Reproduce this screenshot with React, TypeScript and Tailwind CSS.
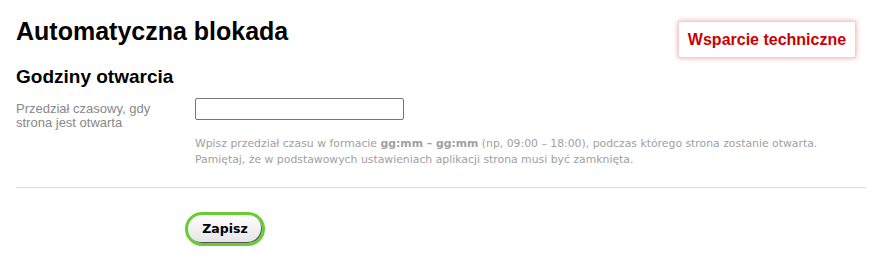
import React from "react";

export default function App() {
  return (
    <div className="w-[882px] h-[266px] bg-white px-4 pt-[13px] font-['Liberation_Sans',Arial,sans-serif]">
      <div className="flex items-start justify-between">
        <h1 className="text-[25px] leading-[36px] font-bold text-black">Automatyczna blokada</h1>
        <div className="mt-[8px] mr-[10px] w-[178px] h-[37px] flex items-center justify-center bg-white border border-[#f3d0d0] shadow-[0_0_5px_rgba(220,60,60,0.45)]">
          <span className="text-[16px] font-bold text-[#cc0000]">Wsparcie techniczne</span>
        </div>
      </div>
      <h2 className="mt-[7px] text-[19px] leading-[24px] font-bold text-black">Godziny otwarcia</h2>
      <div className="mt-[9px] flex">
        <div className="w-[179px] pt-[4px] text-[13px] leading-[14px] text-[#888888]">
          Przedział czasowy, gdy
          <br />
          strona jest otwarta
        </div>
        <div className="flex flex-col">
          <input type="text" className="w-[209px] h-[22px] border border-[#767676] rounded-[2px] bg-white outline-none" />
          <p className="mt-[16px] text-[10.85px] leading-[16px] text-[#a0a0a0] font-['DejaVu_Sans',Verdana,sans-serif]">
            Wpisz przedział czasu w formacie <b>gg:mm – gg:mm</b> (np, 09:00 – 18:00), podczas którego strona zostanie otwarta.
            <br />
            Pamiętaj, że w podstawowych ustawieniach aplikacji strona musi być zamknięta.
          </p>
        </div>
      </div>
      <div className="mt-[19px] h-px bg-[#dddddd]" />
      <div className="mt-[24px] pl-[169px]">
        <button className="w-[80px] h-[34px] rounded-full border-[3px] border-[#66cc33] bg-gradient-to-b from-white to-[#e4e4e4] shadow-[inset_-1px_-1px_0_#555] text-[12.5px] font-bold text-black font-['DejaVu_Sans',Verdana,sans-serif]">
          Zapisz
        </button>
      </div>
    </div>
  );
}
